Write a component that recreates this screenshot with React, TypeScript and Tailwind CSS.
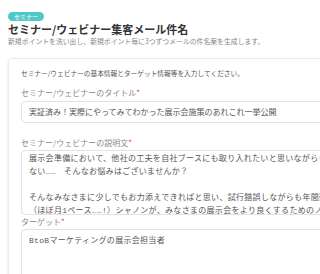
export default function App() {
  const sans = { fontFamily: '"Noto Sans CJK JP", "Noto Sans", sans-serif' };
  const mono = { fontFamily: '"Liberation Mono", "Noto Sans CJK JP", monospace' };

  return (
    <div className="h-[274px] w-[320px] overflow-hidden bg-white text-[#333]" style={sans}>
      {/* Header */}
      <div className="px-2 pt-[12px]">
        <div className="flex">
          <span className="flex h-[9px] items-center rounded-full bg-[#4ec8c8] px-[6px] text-[6px] leading-none text-white">
            セミナー
          </span>
        </div>
        <h1 className="mt-[2px] text-[11px] font-bold leading-[13px] text-[#333]">
          セミナー/ウェビナー集客メール件名
        </h1>
        <p className="mt-[1px] text-[6.85px] leading-[9px] text-[#888]">
          新規ポイントを洗い出し、新規ポイント毎に3つずつメールの件名案を生成します。
        </p>
      </div>

      {/* Form card */}
      <div className="ml-2 mt-[12px] w-[420px] rounded border border-[#ececec] bg-white px-3 pt-[10px] shadow-sm">
        <p className="text-[6.7px] leading-[9px] text-[#555]">
          セミナー/ウェビナーの基本情報とターゲット情報等を入力してください。
        </p>

        <div className="mt-[10px]">
          <label className="block text-[8px] leading-[10px] text-[#888]">
            セミナー/ウェビナーのタイトル<span className="text-[#e53935]">*</span>
          </label>
          <div className="mt-[3px] flex h-[22px] items-center whitespace-nowrap rounded-sm border border-[#e2e2e2] px-[7px] text-[8px] text-[#555]">
            実証済み！実際にやってみてわかった展示会施策のあれこれ一挙公開
          </div>
        </div>

        <div className="mt-[15px]">
          <label className="block text-[8px] leading-[10px] text-[#888]">
            セミナー/ウェビナーの説明文<span className="text-[#e53935]">*</span>
          </label>
          <div
            className="mt-[2px] h-[65px] overflow-hidden whitespace-nowrap rounded-sm border border-[#e2e2e2] px-[7px] pt-[1px] text-[8px] leading-[13px] tracking-[0.3px] text-[#555]"
            style={mono}
          >
            <div>展示会準備において、他社の工夫を自社ブースにも取り入れたいと思いながらも、なかなか</div>
            <div>ない……　そんなお悩みはございませんか？</div>
            <div>&nbsp;</div>
            <div>そんなみなさまに少しでもお力添えできればと思い、試行錯誤しながらも年間数多くの展示会に</div>
            <div>（ほぼ月1ペース……!）シャノンが、みなさまの展示会をより良くするためのノウハウを</div>
          </div>
        </div>

        <div className="mt-[2px]">
          <label className="block text-[8px] leading-[10px] text-[#888]">
            ターゲット<span className="text-[#e53935]">*</span>
          </label>
          <div
            className="mt-[2px] h-[60px] whitespace-nowrap rounded-sm border border-[#e2e2e2] px-[7px] pt-[4px] text-[8px] leading-[13px] tracking-[0.3px] text-[#555]"
            style={mono}
          >
            BtoBマーケティングの展示会担当者
          </div>
        </div>
      </div>
    </div>
  );
}
